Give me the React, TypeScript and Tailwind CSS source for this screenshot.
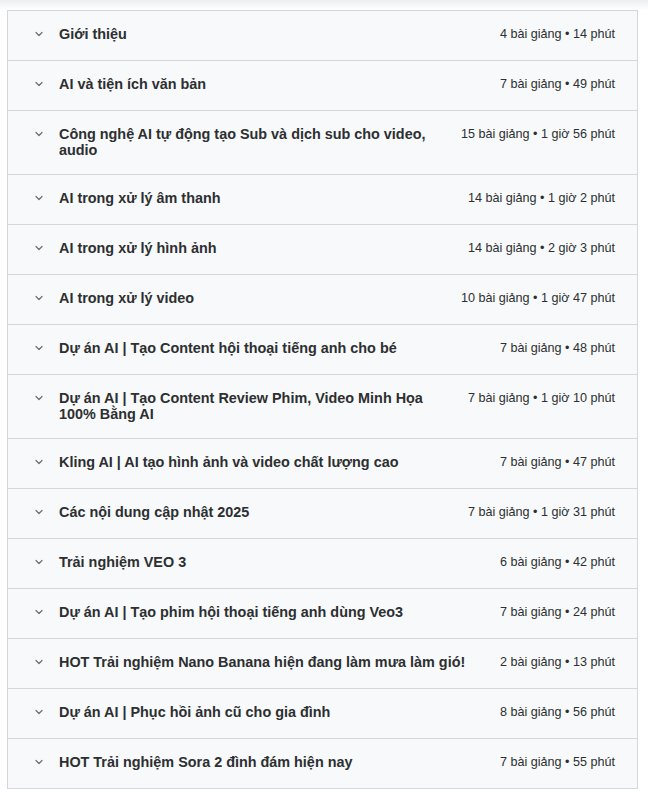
import React from "react";

interface Section {
  title: string;
  meta: string;
}

const sections: Section[] = [
  { title: "Giới thiệu", meta: "4 bài giảng • 14 phút" },
  { title: "AI và tiện ích văn bản", meta: "7 bài giảng • 49 phút" },
  { title: "Công nghệ AI tự động tạo Sub và dịch sub cho video, audio", meta: "15 bài giảng • 1 giờ 56 phút" },
  { title: "AI trong xử lý âm thanh", meta: "14 bài giảng • 1 giờ 2 phút" },
  { title: "AI trong xử lý hình ảnh", meta: "14 bài giảng • 2 giờ 3 phút" },
  { title: "AI trong xử lý video", meta: "10 bài giảng • 1 giờ 47 phút" },
  { title: "Dự án AI | Tạo Content hội thoại tiếng anh cho bé", meta: "7 bài giảng • 48 phút" },
  { title: "Dự án AI | Tạo Content Review Phim, Video Minh Họa 100% Bằng AI", meta: "7 bài giảng • 1 giờ 10 phút" },
  { title: "Kling AI | AI tạo hình ảnh và video chất lượng cao", meta: "7 bài giảng • 47 phút" },
  { title: "Các nội dung cập nhật 2025", meta: "7 bài giảng • 1 giờ 31 phút" },
  { title: "Trải nghiệm VEO 3", meta: "6 bài giảng • 42 phút" },
  { title: "Dự án AI | Tạo phim hội thoại tiếng anh dùng Veo3", meta: "7 bài giảng • 24 phút" },
  { title: "HOT Trải nghiệm Nano Banana hiện đang làm mưa làm gió!", meta: "2 bài giảng • 13 phút" },
  { title: "Dự án AI | Phục hồi ảnh cũ cho gia đình", meta: "8 bài giảng • 56 phút" },
  { title: "HOT Trải nghiệm Sora 2 đình đám hiện nay", meta: "7 bài giảng • 55 phút" },
];

const Chevron = () => (
  <svg width="10" height="10" viewBox="0 0 10 10" fill="none" className="text-[#6a6f73]">
    <path d="M2 3.5 L5 6.5 L8 3.5" stroke="currentColor" strokeWidth="1.2" strokeLinecap="round" strokeLinejoin="round" />
  </svg>
);

export default function App() {
  return (
    <div className="min-h-[796px] w-[648px] bg-white font-['Liberation_Sans',Arial,sans-serif] text-[#2d2f31]">
      <div className="h-[10px] bg-gradient-to-b from-[#eceef1] to-white" />
      <div className="ml-[7px] w-[631px] border-x border-[#d1d7dc]">
        {sections.map((s) => (
          <div
            key={s.title}
            className="flex items-start border-y border-[#d1d7dc] -mb-px bg-[#f7f9fa] pl-[26px] pr-[22px] pt-[14px] pb-[16px]"
          >
            <div className="flex h-[18px] w-[10px] shrink-0 items-center">
              <Chevron />
            </div>
            <div className="ml-[15px] flex-1 pr-6 text-[14.4px] font-bold leading-[16px] pt-px">
              {s.title}
            </div>
            <div className="shrink-0 text-[12.6px] leading-[19px] whitespace-nowrap">{s.meta}</div>
          </div>
        ))}
      </div>
    </div>
  );
}
